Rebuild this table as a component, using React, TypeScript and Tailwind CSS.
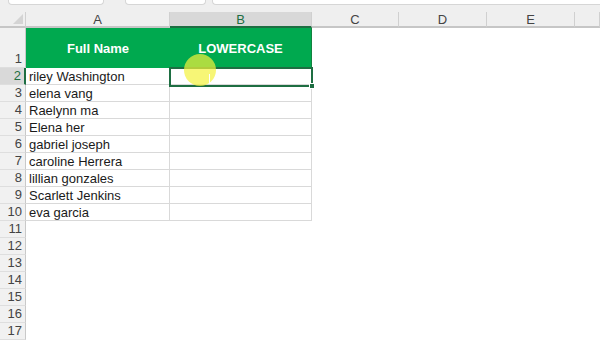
import React from 'react';

const names = [
  'riley Washington',
  'elena vang',
  'Raelynn ma',
  'Elena her',
  'gabriel joseph',
  'caroline Herrera',
  'lillian gonzales',
  'Scarlett Jenkins',
  'eva garcia',
];

const cols = [
  { key: 'A', w: 'w-[144px]' },
  { key: 'B', w: 'w-[142px]' },
  { key: 'C', w: 'w-[87px]' },
  { key: 'D', w: 'w-[88px]' },
  { key: 'E', w: 'w-[88px]' },
  { key: 'F', w: 'flex-1' },
];

function RowHead({ n, active, tall }: { n: number; active?: boolean; tall?: boolean }) {
  return (
    <div
      className={`w-[26px] shrink-0 flex items-end justify-end pr-[3px] text-[13px] leading-[17px] border-b border-[#dedede] ${
        tall ? 'h-[40px]' : 'h-[17px]'
      } ${
        active
          ? 'bg-[#d9d9d9] text-[#1e6e42] border-r-2 border-r-[#1e6e42]'
          : 'bg-[#f1f1f1] text-[#444] border-r border-r-[#c9c9c9]'
      }`}
    >
      {n}
    </div>
  );
}

export default function App() {
  return (
    <div className="relative w-[600px] h-[340px] overflow-hidden bg-white font-['Liberation_Sans',Arial,sans-serif]">
      {/* formula bar edge */}
      <div className="h-[12px] bg-[#efefef] flex items-start">
        <div className="ml-[8px] w-[96px] h-[5px] bg-white border border-t-0 border-[#d6d6d6] rounded-b-[4px]" />
        <div className="ml-[21px] w-[81px] h-[5px] bg-white border border-t-0 border-[#d6d6d6] rounded-b-[4px]" />
        <div className="ml-[6px] flex-1 h-[5px] bg-white border border-t-0 border-r-0 border-[#d6d6d6] rounded-bl-[4px]" />
      </div>

      {/* column headers */}
      <div className="flex h-[16px] bg-[#efefef]">
        <div className="w-[26px] shrink-0 relative border-r border-[#d0d0d0] border-b-2 border-b-[#c6c6c6]">
          <div className="absolute right-[2px] bottom-[2px] w-0 h-0 border-l-[10px] border-l-transparent border-b-[10px] border-b-[#d4d4d4]" />
        </div>
        {cols.map((c) => (
          <div
            key={c.key}
            className={`${c.w} shrink-0 flex items-center justify-center text-[13px] leading-none border-r border-[#d0d0d0] ${
              c.key === 'B'
                ? 'bg-[#d8d8d8] text-[#1e6e42] border-b-2 border-b-[#1e6e42]'
                : 'text-[#444] border-b-2 border-b-[#c6c6c6]'
            }`}
          >
            {c.key === 'F' ? '' : c.key}
          </div>
        ))}
      </div>

      {/* row 1: header cells */}
      <div className="flex">
        <RowHead n={1} tall />
        <div className="w-[144px] h-[40px] bg-[#00a94f] flex items-center justify-center pt-[2px] text-white font-bold text-[13px]">
          Full Name
        </div>
        <div className="w-[142px] h-[40px] bg-[#00a94f] border-r border-[#12823f] flex items-center justify-center pt-[2px] text-white font-bold text-[13px]">
          LOWERCASE
        </div>
      </div>

      {/* data rows */}
      {names.map((name, i) => (
        <div key={name} className="flex">
          <RowHead n={i + 2} active={i === 0} />
          <div className="w-[144px] h-[17px] border-r border-b border-[#d9d9d9] pl-[3px] text-[13px] leading-[18px] text-[#1a1a1a] whitespace-nowrap">
            {name}
          </div>
          <div className="w-[142px] h-[17px] border-r border-b border-[#d9d9d9]" />
        </div>
      ))}

      {/* empty rows */}
      {[11, 12, 13, 14, 15, 16, 17].map((n) => (
        <div key={n} className="flex">
          <RowHead n={n} />
        </div>
      ))}

      {/* active cell B2 */}
      <div className="absolute left-[169px] top-[67px] w-[144px] h-[20px] border-2 border-[#1e6e42]">
        <div className="absolute -right-[4px] -bottom-[4px] w-[6px] h-[6px] bg-[#1e6e42] border border-white" />
      </div>

      {/* pointer highlight */}
      <div className="absolute left-[184px] top-[54px] w-[32px] h-[32px] rounded-full bg-[#f4f23c]/70" />
      <div className="absolute left-[209px] top-[74px] w-[1px] h-[9px] bg-white" />
    </div>
  );
}
